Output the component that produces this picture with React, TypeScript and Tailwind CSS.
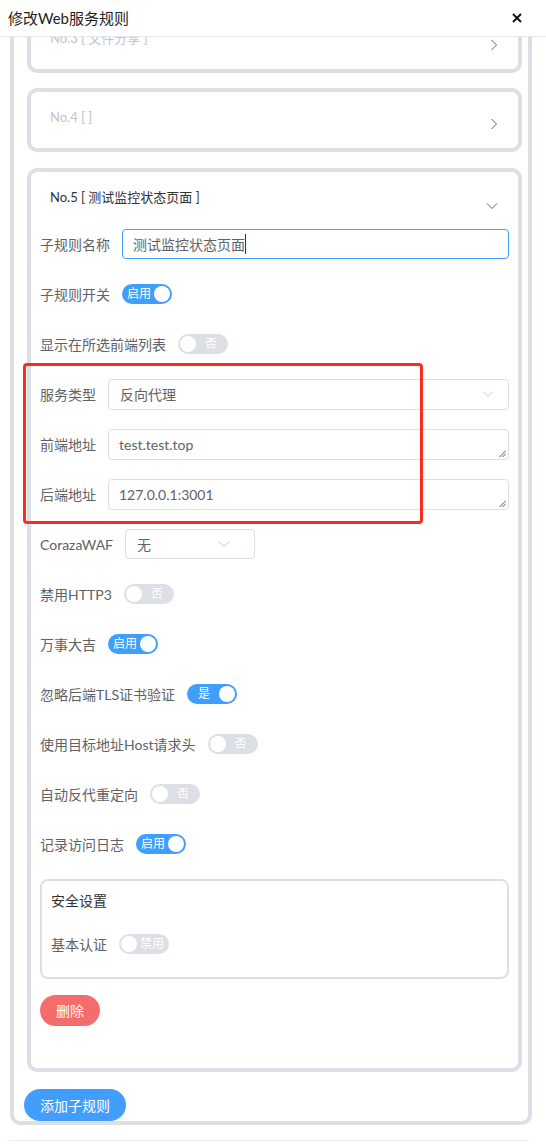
import React from 'react';

const font = { fontFamily: 'Lato, "Noto Sans CJK SC", sans-serif' };

function ChevronRight() {
  return (
    <svg width="8" height="12" viewBox="0 0 8 12" fill="none" stroke="#606266" strokeWidth="1">
      <polyline points="1.5,1 6.5,6 1.5,11" />
    </svg>
  );
}

function ChevronDown({ color = '#606266', w = 12 }: { color?: string; w?: number }) {
  return (
    <svg width={w} height="8" viewBox="0 0 12 8" fill="none" stroke={color} strokeWidth="1">
      <polyline points="1,1.5 6,6.5 11,1.5" />
    </svg>
  );
}

function ResizeHandle() {
  return (
    <svg className="absolute bottom-[2px] right-[2px]" width="7" height="7" viewBox="0 0 7 7" stroke="#444" strokeWidth="0.9">
      <line x1="7" y1="0.5" x2="0.5" y2="7" />
      <line x1="7" y1="3.5" x2="3.5" y2="7" />
    </svg>
  );
}

function Switch({ on, text }: { on: boolean; text: string }) {
  return (
    <div
      className={`flex h-[20px] w-[50px] shrink-0 items-center rounded-full px-[2px] ${
        on ? 'bg-[#409eff]' : 'bg-[#dcdfe6]'
      }`}
    >
      {on ? (
        <>
          <span className="flex-1 text-center text-[12px] leading-none text-white">{text}</span>
          <span className="h-[16px] w-[16px] rounded-full bg-white" />
        </>
      ) : (
        <>
          <span className="h-[16px] w-[16px] rounded-full bg-white" />
          <span className="flex-1 text-center text-[12px] leading-none text-white">{text}</span>
        </>
      )}
    </div>
  );
}

function Row({ label, children }: { label: string; children: React.ReactNode }) {
  return (
    <div className="mb-[20px] flex h-[30px] items-center">
      <span className="mr-[12px] shrink-0 whitespace-nowrap text-[14px] text-[#606266]">{label}</span>
      {children}
    </div>
  );
}

function CollapsedCard({ title, className }: { title: string; className?: string }) {
  return (
    <div className={`ml-[13px] mr-[6px] h-[64px] rounded-[10px] border-4 border-[#dcdfe6] ${className ?? ''}`}>
      <div className="flex justify-between pl-[19px] pr-[20px]">
        <span className="pt-[15px] text-[13px] leading-[20px] text-[#c0c4cc]">{title}</span>
        <span className="pt-[26px]">
          <ChevronRight />
        </span>
      </div>
    </div>
  );
}

export default function App() {
  return (
    <div className="relative h-[1147px] w-[546px] overflow-hidden bg-white" style={font}>
      <div className="flex h-[37px] items-center justify-between border-b border-[#e4e7ed] pl-[8px] pr-[24px]">
        <span className="text-[15px] text-[#222]">修改Web服务规则</span>
        <svg width="10" height="10" viewBox="0 0 10 10" stroke="#111" strokeWidth="2">
          <line x1="1" y1="1" x2="9" y2="9" />
          <line x1="9" y1="1" x2="1" y2="9" />
        </svg>
      </div>

      <div className="h-[1090px] overflow-hidden">
        <div className="-mt-[48px] ml-[10px] w-[522px] rounded-[10px] border-4 border-[#dcdfe6] pt-[16px]">
          <CollapsedCard title="No.3 [ 文件分享 ]" />
          <CollapsedCard title="No.4 [ ]" className="mt-[15px]" />

          <div className="ml-[13px] mr-[6px] mt-[16px] rounded-[10px] border-4 border-[#dcdfe6]">
            <div className="flex h-[57px] justify-between pl-[19px] pr-[20px]">
              <span className="pt-[15px] text-[13px] leading-[20px] text-[#303133]">No.5 [ 测试监控状态页面 ]</span>
              <span className="pt-[30px]">
                <ChevronDown />
              </span>
            </div>

            <div className="px-[9px]">
              <Row label="子规则名称">
                <div className="flex h-[30px] flex-1 items-center rounded-[4px] border border-[#409eff] px-[10px] text-[14px] text-[#606266]">
                  测试监控状态页面
                  <span className="h-[20px] w-px bg-[#333]" />
                </div>
              </Row>
              <Row label="子规则开关">
                <Switch on text="启用" />
              </Row>
              <Row label="显示在所选前端列表">
                <Switch on={false} text="否" />
              </Row>
              <Row label="服务类型">
                <div className="flex h-[31px] flex-1 items-center justify-between rounded-[4px] border border-[#dcdfe6] pl-[11px] pr-[14px] text-[14px] text-[#606266]">
                  反向代理
                  <ChevronDown color="#c0c4cc" />
                </div>
              </Row>
              <Row label="前端地址">
                <div className="relative flex h-[31px] flex-1 items-center rounded-[4px] border border-[#dcdfe6] px-[10px] text-[14px] text-[#606266]">
                  test.test.top
                  <ResizeHandle />
                </div>
              </Row>
              <Row label="后端地址">
                <div className="relative flex h-[31px] flex-1 items-center rounded-[4px] border border-[#dcdfe6] px-[10px] text-[14px] text-[#606266]">
                  127.0.0.1:3001
                  <ResizeHandle />
                </div>
              </Row>
              <Row label="CorazaWAF">
                <div className="flex h-[30px] w-[130px] items-center justify-between rounded-[4px] border border-[#dcdfe6] pl-[11px] pr-[24px] text-[14px] text-[#606266]">
                  无
                  <ChevronDown color="#c0c4cc" />
                </div>
              </Row>
              <Row label="禁用HTTP3">
                <Switch on={false} text="否" />
              </Row>
              <Row label="万事大吉">
                <Switch on text="启用" />
              </Row>
              <Row label="忽略后端TLS证书验证">
                <Switch on text="是" />
              </Row>
              <Row label="使用目标地址Host请求头">
                <Switch on={false} text="否" />
              </Row>
              <Row label="自动反代重定向">
                <Switch on={false} text="否" />
              </Row>
              <Row label="记录访问日志">
                <Switch on text="启用" />
              </Row>

              <div className="h-[100px] rounded-[8px] border-2 border-[#dcdfe6] px-[9px] pt-[10px]">
                <div className="text-[14px] leading-[20px] text-[#303133]">安全设置</div>
                <div className="mt-[18px] flex h-[30px] items-center">
                  <span className="mr-[12px] text-[14px] text-[#606266]">基本认证</span>
                  <Switch on={false} text="禁用" />
                </div>
              </div>

              <button className="mt-[16px] mb-[42px] flex h-[31px] w-[60px] items-center justify-center rounded-full bg-[#f56c6c] text-[14px] text-white">
                删除
              </button>
            </div>
          </div>

          <button className="ml-[10px] mt-[17px] flex h-[32px] w-[102px] items-center justify-center rounded-full bg-[#409eff] text-[14px] text-white">
            添加子规则
          </button>
        </div>
      </div>

      <div className="ml-[7px] mt-[13px] h-px w-[523px] bg-[#ebeef5]" />

      <div className="absolute left-[23px] top-[363px] h-[161px] w-[400px] rounded-[4px] border-[3px] border-[#ff2a1f]" />
    </div>
  );
}
